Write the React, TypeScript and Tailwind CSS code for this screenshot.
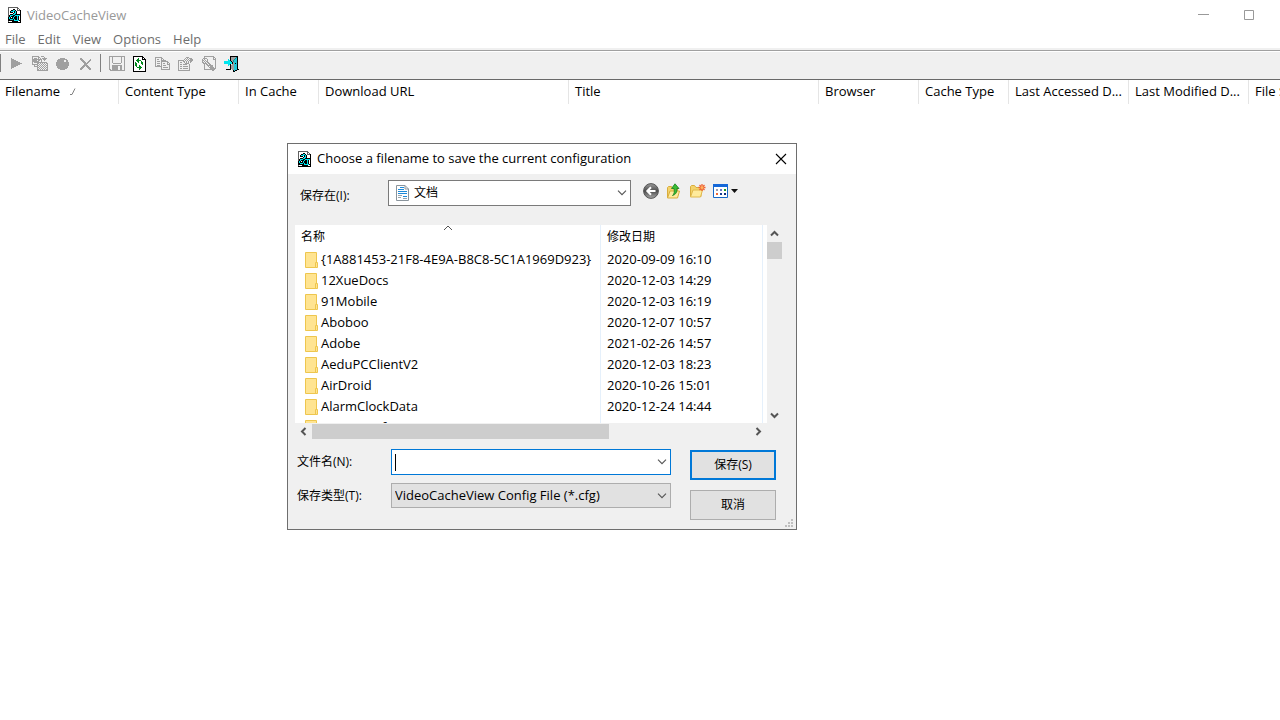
import type { ReactNode } from "react";

type Palette = Record<string, string>;

/** Draws a small pixel icon from rows of palette keys; "." is transparent. */
function Pixels({ rows, palette }: { rows: string[]; palette: Palette }) {
  const width = Math.max(...rows.map((r) => r.length));
  const paths: Record<string, string> = {};
  rows.forEach((row, y) => {
    let x = 0;
    while (x < row.length) {
      const key = row[x];
      let end = x + 1;
      while (end < row.length && row[end] === key) end++;
      if (key !== ".") paths[key] = (paths[key] ?? "") + `M${x} ${y}h${end - x}v1h-${end - x}z`;
      x = end;
    }
  });
  return (
    <svg width={width} height={rows.length} viewBox={`0 0 ${width} ${rows.length}`} shapeRendering="crispEdges" aria-hidden="true">
      {Object.entries(paths).map(([key, d]) => (
        <path key={key} d={d} fill={palette[key]} />
      ))}
    </svg>
  );
}

const palette: Palette = { k: "#000000", w: "#ffffff", c: "#00e5ee", g: "#a0a0a0", d: "#606060", n: "#008a1c", t: "#0a8f9c", b: "#1fc8d8" };

const appIcon = [
  "dddddddddd...",
  "dwwwwwwwwdd..",
  "dwwwwkkwwdwd.",
  "dwwkkcckwdddk",
  "dwkccckckwwwk",
  "dwkkkwkckwwwk",
  "dwwwwkcckwwwk",
  "dwkkkcckkkkkk",
  "dkccckkccccck",
  "dkckkkckkckwk",
  "kckwkckkkckwk",
  "kckkkckkkckwk",
  "kkccckckkckwk",
  "kkkkkkccccckk",
  "dwwwkkkkkkwwk",
  "kkkkkkkkkkkkk",
];
const playIcon = ["g..........", "ggg........", "ggggg......", "ggggggg....", "ggggggggg..", "ggggggggggg", "ggggggggg..", "ggggggg....", "ggggg......", "ggg........", "g.........."];
const copyPlayIcon = [
  "ggggggg..ggg....",
  "g.....gg....g...",
  "g.ggg.g.g.ggggg.",
  "gggggggggg.ggg..",
  "ggggg.gg.g..g...",
  "ggggggg..g......",
  "g.ggggggggggggg.",
  "g....gg.g.g.g.gg",
  "gggggg.g.g.g.g.g",
  "..g..gg.g.g.g.gg",
  "..gggg.g.g.g.g.g",
  ".....gg.g.g.g.gg",
  ".....g.g.g.g.g.g",
  ".....gg.g.g.g.gg",
  ".....ggggggggggg",
];
const recordIcon = ["....ggggg....", "..ggggggggg..", ".ggggggg..gg.", ".ggggggg..gg.", "ggggggggggggg", "ggggggggggggg", "ggggggggggggg", "ggggggggggggg", ".ggggggggggg.", ".ggggggggggg.", "..ggggggggg..", "....ggggg...."];
const deleteIcon = ["gg.........", "ggg.......g", ".ggg.....gg", "..ggg...gg.", "...ggg.gg..", "....gggg...", "....ggg....", "...ggggg...", "..ggg.ggg..", ".ggg...ggg.", "ggg.....ggg", "gg.......gg"];
const saveIcon = [
  "gggggggggggggggg",
  "g..g........g..g",
  "g..g........g..g",
  "g..g........g..g",
  "g..g........g..g",
  "g..g........g..g",
  "g..g........g..g",
  "g...gggggggg...g",
  "g..............g",
  "g..gggggggggg..g",
  "g..gggggg..gg..g",
  "g..gggggg..gg..g",
  "g..gggggg..gg..g",
  "gg.gggggg..gg..g",
  ".ggggggggggggggg",
];
const refreshIcon = [
  "kkkkkkkkkk...",
  "kwwwwwwwwkk..",
  "kwwwwnwwwkwk.",
  "kwwwnnwwwkkkk",
  "kwwnnnnnwwwwk",
  "kwwwnnwwnwwwk",
  "kwnwwnwwnnwwk",
  "kwnnwwwwnnwwk",
  "kwnnwwwwwnwwk",
  "kwnnwwnwwwwwk",
  "kwwnwwnnwwwwk",
  "kwwwnnnnnwwwk",
  "kwwwwwnnwwwwk",
  "kwwwwwnwwwwwk",
  "kwwwwwwwwwwwk",
  "kkkkkkkkkkkkk",
];
const copyIcon = [
  "ggggggg........",
  "g.....gg.......",
  "g.gg..g.g......",
  "g.....ggggg....",
  "g.ggg.ggggggg..",
  "g.....g.....gg.",
  "g.ggg.g.gg..g.g",
  "g.....g.....ggg",
  "g.ggg.g.ggg...g",
  "ggggggg.......g",
  "......g.ggggg.g",
  "......g.......g",
  "......ggggggggg",
];
const propertiesIcon = [
  "........ggg....",
  ".......g.g.ggg.",
  "......g.g.g.ggg",
  "gggggg.g.g.gggg",
  "g....gg.g.g.gg.",
  "g.gg..g.g.g.g..",
  "g......gggg....",
  "g.gg.gggg..g...",
  "g..........g...",
  "g.gg.ggggg.g...",
  "g..........g...",
  "g.gg.ggggg.g...",
  "g..........g...",
  "gggggggggggg...",
];
const findIcon = [
  "..gggggggggg..",
  "..g........gg.",
  ".gggg......g.g",
  "g.g..g.....ggg",
  "gg.g.g.......g",
  "g.g.gg.......g",
  "gg.g.gg......g",
  ".gggg.gg.....g",
  "..g.gg.gg....g",
  "..g..gggggg..g",
  "..g...g.ggg..g",
  "..g....ggggg.g",
  "..g.....gggggg",
  "..ggggggggggg.",
  "..........gg..",
];
const exitIcon = [
  "......kkkkkkkk.",
  "......kgggggtk.",
  "......kggggtbk.",
  "....c.kgggtbbk.",
  "....cckggtbbbk.",
  "ccccccckgtbbbk.",
  "cccccccckgbbbk.",
  "cccccccckgbkbk.",
  "....cck.ggbbbk.",
  "....c.kgggbbbk.",
  "......kgggbbbk.",
  "......kgggbbbk.",
  "......kgggbbbk.",
  "..kkkkk.ggbbbkk",
  ".........kbkk..",
  ".........kk....",
];

const tools: { label: string; rows: string[]; enabled?: boolean }[] = [
  { label: "Play", rows: playIcon },
  { label: "Copy and play", rows: copyPlayIcon },
  { label: "Record", rows: recordIcon },
  { label: "Delete", rows: deleteIcon },
];
const moreTools: typeof tools = [
  { label: "Save", rows: saveIcon },
  { label: "Refresh", rows: refreshIcon, enabled: true },
  { label: "Copy", rows: copyIcon },
  { label: "Properties", rows: propertiesIcon },
  { label: "Find", rows: findIcon },
  { label: "Exit", rows: exitIcon, enabled: true },
];

function ToolButton({ label, rows, enabled }: (typeof tools)[number]) {
  return (
    <button type="button" aria-label={label} disabled={!enabled} className="flex h-[23px] w-[23px] items-center justify-center">
      <Pixels rows={rows} palette={palette} />
    </button>
  );
}

function Chevron() {
  return (
    <svg width="10" height="6" viewBox="0 0 10 6" fill="none" stroke="#555555" strokeWidth="1.1" aria-hidden="true">
      <path d="M1 .7 5 4.7 9 .7" />
    </svg>
  );
}

function ScrollArrow({ d, w, h, label }: { d: string; w: number; h: number; label: string }) {
  return (
    <button type="button" aria-label={label} className="flex size-4 shrink-0 items-center justify-center">
      <svg width={w} height={h} viewBox={`0 0 ${w} ${h}`} fill="none" stroke="#555555" strokeWidth="2" aria-hidden="true">
        <path d={d} />
      </svg>
    </button>
  );
}

function IconButton({ label, children }: { label: string; children: ReactNode }) {
  return (
    <button type="button" aria-label={label} className="flex h-5 items-center justify-center">
      {children}
    </button>
  );
}

function FolderIcon() {
  return (
    <svg width="13" height="16" viewBox="0 0 13 16" aria-hidden="true">
      <path d="M.5.5h11v15H.5z" fill="#ffe491" stroke="#eec64e" />
      <path d="M10.5 10.5h2v5h-2z" fill="#ffe491" stroke="#eec64e" />
    </svg>
  );
}

const columns = [
  { name: "Filename", width: "w-[119px]" },
  { name: "Content Type", width: "w-[120px]" },
  { name: "In Cache", width: "w-20" },
  { name: "Download URL", width: "w-[250px]" },
  { name: "Title", width: "w-[250px]" },
  { name: "Browser", width: "w-[100px]" },
  { name: "Cache Type", width: "w-[90px]" },
  { name: "Last Accessed D...", width: "w-[120px]" },
  { name: "Last Modified D...", width: "w-[120px]" },
  { name: "File Size", width: "w-[80px]" },
];

const folders = [
  ["{1A881453-21F8-4E9A-B8C8-5C1A1969D923}", "2020-09-09 16:10"],
  ["12XueDocs", "2020-12-03 14:29"],
  ["91Mobile", "2020-12-03 16:19"],
  ["Aboboo", "2020-12-07 10:57"],
  ["Adobe", "2021-02-26 14:57"],
  ["AeduPCClientV2", "2020-12-03 18:23"],
  ["AirDroid", "2020-10-26 15:01"],
  ["AlarmClockData", "2020-12-24 14:44"],
  ["Apowersoft", ""],
];

function SaveDialog() {
  return (
    <form
      role="dialog"
      aria-labelledby="dialog-title"
      className="absolute left-[287px] top-[143px] w-[510px] border border-[#6e6e6e] bg-[#f0f0f0] text-xs text-black"
    >
      <header className="flex h-[30px] items-center bg-white pl-2.5 pr-[7px]">
        <Pixels rows={appIcon} palette={palette} />
        <h2 id="dialog-title" className="ml-1.5 flex-1 text-[13px]">
          Choose a filename to save the current configuration
        </h2>
        <button type="button" aria-label="Close" className="p-0.5">
          <svg width="12" height="12" viewBox="0 0 12 12" stroke="#000000" strokeWidth="1.1" aria-hidden="true">
            <path d="m1 1 10 10M11 1 1 11" />
          </svg>
        </button>
      </header>

      <div className="flex items-center pl-3 pt-1.5">
        <span id="look-in" className="w-[88px] pt-1.5">
          保存在(I):
        </span>
        <button type="button" aria-labelledby="look-in" className="flex h-[26px] w-[243px] items-center border border-[#7a7a7a] bg-white pl-[7px] pr-[3px] text-left">
          <svg width="13" height="16" viewBox="0 0 13 16" aria-hidden="true">
            <path d="M.5.5h8.500l3.500 3.500v11.500H.5z" fill="#ffffff" stroke="#8a949c" />
            <path d="M9 .5V4h3.500" fill="none" stroke="#8a949c" />
            <path d="M4 2.500h4M2 4.500h6M2 6.500h9M2 8.500h9M7 11.500h4" stroke="#1f8ad8" strokeWidth="1.200" />
            <path d="M2 10.500h4M2 12.500h3M7 13.500h4" stroke="#9aa5ad" />
          </svg>
          <span className="ml-[5px] flex-1">文档</span>
          <Chevron />
        </button>
        <div className="-mt-1 ml-3 flex items-center gap-[7px]">
          <IconButton label="Back">
            <svg width="16" height="16" viewBox="0 0 16 16" aria-hidden="true">
              <defs>
                <linearGradient id="back" x2="0" y2="1">
                  <stop stopColor="#9b9b9b" />
                  <stop offset=".5" stopColor="#4c4c4c" />
                  <stop offset="1" stopColor="#aaaaaa" />
                </linearGradient>
              </defs>
              <circle cx="8" cy="8" r="7.400" fill="url(#back)" stroke="#555555" />
              <path d="M12.500 8H4.500M8 4.300 4.300 8 8 11.700" fill="none" stroke="#ffffff" strokeWidth="2" />
            </svg>
          </IconButton>
          <IconButton label="Up one level">
            <svg width="16" height="16" viewBox="0 0 16 16" aria-hidden="true">
              <path d="M1.500 14.500v-10l1-1h3l1 1.500h5v8.500z" fill="#f3d36b" stroke="#d9ad3d" />
              <path d="m1.500 15 2.500-7h9.500l-2 7z" fill="#ffeb9c" stroke="#d9ad3d" />
              <path d="M6.500 12.500c2-1.500 2-4 1.500-7H5.500L9 .8 13 5.500h-2.200c.4 3.500-.8 6-4.300 7z" fill="#3bbd35" stroke="#16801e" strokeWidth=".8" />
            </svg>
          </IconButton>
          <IconButton label="Create new folder">
            <svg width="17" height="16" viewBox="0 0 17 16" aria-hidden="true">
              <path d="M1.500 13.500v-10l1-1h3l1.500 2h5v9z" fill="#f3d36b" stroke="#d9ad3d" />
              <path d="m1.500 14 2.500-7h9.500l-2 7z" fill="#ffeb9c" stroke="#e0b84c" />
              <path d="M13 1v7M9.500 4.500h7M10.500 2l5 5M15.500 2l-5 5" stroke="#ef6332" strokeWidth="1.300" />
              <circle cx="13" cy="4.500" r="1.500" fill="#ffb060" />
            </svg>
          </IconButton>
          <IconButton label="View menu">
            <svg width="26" height="16" viewBox="0 0 26 16" aria-hidden="true">
              <path d="M.5 2h14v12.500H.5z" fill="#ffffff" stroke="#1668c8" />
              <path d="M0 1h15v3H0z" fill="#1668d8" />
              <path d="M3 6h2v2H3z" fill="#9b9bb0" />
              <path d="M7 6h2v2H7z" fill="#6875c8" />
              <path d="M11 6h2v2h-2z" fill="#16991f" />
              <path d="M3 10h2v2H3z" fill="#ef6938" />
              <path d="M7 10h2v2H7z" fill="#143d94" />
              <path d="M11 10h2v2h-2z" fill="#102a78" />
              <path d="M18 6h7l-3.500 4z" fill="#111111" />
            </svg>
          </IconButton>
        </div>
      </div>

      <div className="ml-[7px] mr-3.5 mt-[19px]">
        <div className="flex h-[198px]">
          <div className="min-w-0 flex-1 overflow-hidden bg-white">
            <table className="w-full table-fixed border-separate border-spacing-0 text-[13px]">
              <thead>
                <tr className="h-6 text-xs">
                  <th className="w-[306px] border-r border-[#e5f0fb] p-0 pl-1.5 text-left font-normal">
                    <div className="relative">
                      名称
                      <svg className="absolute -top-1 left-[142px]" width="10" height="6" viewBox="0 0 10 6" fill="none" stroke="#555555" aria-hidden="true">
                        <path d="M1 5 5 1l4 4" />
                      </svg>
                    </div>
                  </th>
                  <th className="w-[162px] border-r border-[#e5f0fb] p-0 pl-1.5 text-left font-normal">修改日期</th>
                  <th className="p-0" />
                </tr>
              </thead>
              <tbody>
                {folders.map(([name, date]) => (
                  <tr key={name} className="h-[21px]">
                    <td className="border-r border-[#e5f0fb] p-0 pl-2.5">
                      <div className="flex h-[21px] items-center gap-[3px] whitespace-nowrap">
                        <FolderIcon />
                        {name}
                      </div>
                    </td>
                    <td className="border-r border-[#e5f0fb] p-0 pl-1.5">{date}</td>
                    <td className="p-0" />
                  </tr>
                ))}
              </tbody>
            </table>
          </div>
          <div className="flex w-[15px] flex-col items-center">
            <ScrollArrow label="Scroll up" w={9} h={7} d="M1 5.500 4.500 2 8 5.500" />
            <div className="mt-px h-[17px] w-full bg-[#cdcdcd]" />
            <div className="flex-1" />
            <ScrollArrow label="Scroll down" w={9} h={7} d="M1 1.500 4.500 5 8 1.500" />
          </div>
        </div>
        <div className="mr-4 mt-px flex h-[15px] items-center">
          <ScrollArrow label="Scroll left" w={7} h={9} d="M5.500 1 2 4.500 5.500 8" />
          <div className="ml-px h-full w-[297px] bg-[#cdcdcd]" />
          <div className="flex-1" />
          <ScrollArrow label="Scroll right" w={7} h={9} d="M1.500 1 5 4.500 1.500 8" />
        </div>
      </div>

      <div className="flex pb-[9px] pl-[9px] pr-5 pt-2.5">
        <div className="flex flex-1 flex-col gap-2">
          <div className="flex items-center">
            <label htmlFor="file-name" className="w-[94px]">
              文件名(N):
            </label>
            <div className="flex h-[26px] w-[280px] items-center border border-[#0078d7] bg-white px-[3px]">
              <span className="h-[17px] w-px bg-black" />
              <input id="file-name" type="text" className="h-full min-w-0 flex-1 text-[13px] outline-none" />
              <Chevron />
            </div>
          </div>
          <div className="flex items-center">
            <label htmlFor="file-type" className="w-[94px]">
              保存类型(T):
            </label>
            <div className="relative">
              <select id="file-type" className="h-[25px] w-[280px] appearance-none border border-[#adadad] bg-[#e1e1e1] pl-[3px] text-[13px]">
                <option>VideoCacheView Config File (*.cfg)</option>
              </select>
              <span className="pointer-events-none absolute right-1 top-2.5">
                <Chevron />
              </span>
            </div>
          </div>
        </div>
        <div className="flex w-[86px] flex-col gap-2.5 pt-px">
          <button type="submit" className="h-[30px] border-2 border-[#0078d7] bg-[#e1e1e1]">
            保存(S)
          </button>
          <button type="button" className="h-[30px] border border-[#adadad] bg-[#e1e1e1]">
            取消
          </button>
        </div>
      </div>
      <svg className="absolute bottom-px right-[3px]" width="9" height="9" viewBox="0 0 9 9" fill="#bfbfbf" shapeRendering="crispEdges" aria-hidden="true">
        <path d="M7 0h2v2H7zM7 3h2v2H7zM4 3h2v2H4zM7 6h2v2H7zM4 6h2v2H4zM1 6h2v2H1z" />
      </svg>
    </form>
  );
}

export default function App() {
  return (
    <div className="relative min-h-screen overflow-hidden bg-white font-['Open_Sans','Noto_Sans_CJK_SC',sans-serif] text-[13px] leading-4 text-black">
      <header className="flex h-[29px] items-center pl-2">
        <Pixels rows={appIcon} palette={palette} />
        <h1 className="ml-1.5 flex-1 text-[#999999]">VideoCacheView</h1>
        <button type="button" aria-label="Minimize" className="flex w-[45px] justify-center">
          <svg width="11" height="11" viewBox="0 0 11 11" stroke="#999999" aria-hidden="true">
            <path d="M0 5.500h11" />
          </svg>
        </button>
        <button type="button" aria-label="Maximize" className="mr-2 flex w-[46px] justify-center">
          <svg width="10" height="10" viewBox="0 0 10 10" fill="none" stroke="#999999" aria-hidden="true">
            <path d="M.5.5h9v9h-9z" />
          </svg>
        </button>
      </header>
      <nav className="flex h-[19px] items-center gap-3 pl-[5px] text-[#6d6d6d]">
        {["File", "Edit", "View", "Options", "Help"].map((item) => (
          <button type="button" key={item}>
            {item}
          </button>
        ))}
      </nav>
      <div className="h-[3px] border-b border-[#a0a0a0] bg-[#f0f0f0]" />
      <div className="flex h-[29px] items-start border-b border-t border-b-[#696969] border-t-white bg-[#f0f0f0]">
        <div className="mt-0.5 h-[18px] w-px bg-[#808080]" />
        <div className="ml-1 flex">
          {tools.map((tool) => (
            <ToolButton key={tool.label} {...tool} />
          ))}
        </div>
        <div className="ml-[3px] mt-0.5 h-[18px] w-px bg-[#808080]" />
        <div className="ml-1 flex">
          {moreTools.map((tool) => (
            <ToolButton key={tool.label} {...tool} />
          ))}
        </div>
      </div>
      <div className="overflow-hidden">
        <table className="w-[1329px] table-fixed border-separate border-spacing-0">
          <thead>
            <tr className="h-6">
              {columns.map(({ name, width }, i) => (
                <th key={name} className={`${width} ${i === 0 ? "pl-[5px]" : "pl-1.5"} whitespace-nowrap border-r border-[#e5e5e5] pb-0.5 pr-0 pt-0 text-left font-normal`}>
                  <div className="flex items-center">
                    {name}
                    {i === 0 && (
                      <svg className="ml-2.5" width="6" height="7" viewBox="0 0 6 7" fill="none" stroke="#808080" aria-hidden="true">
                        <path d="M0 6.500h2L5 .5" />
                      </svg>
                    )}
                  </div>
                </th>
              ))}
            </tr>
          </thead>
        </table>
      </div>
      <SaveDialog />
    </div>
  );
}
